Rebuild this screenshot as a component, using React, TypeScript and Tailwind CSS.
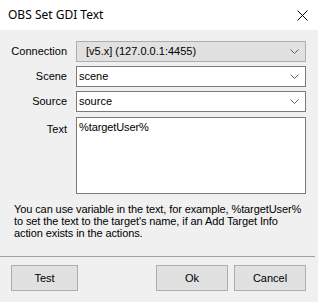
import React from 'react';

const ui = { fontFamily: '"Liberation Sans", Arial, sans-serif' };

function Chevron({ color = '#606060' }: { color?: string }) {
  return (
    <svg width="9" height="6" viewBox="0 0 9 6" className="shrink-0">
      <path d="M0.5 0.5 L4.5 4.5 L8.5 0.5" fill="none" stroke={color} strokeWidth="1" />
    </svg>
  );
}

function Row({ label, children, top }: { label: string; children: React.ReactNode; top?: boolean }) {
  return (
    <div className={`flex ${top ? 'items-start' : 'items-center'}`}>
      <div className={`w-[67px] shrink-0 text-right text-[11px] text-black ${top ? 'pt-[5px]' : ''}`}>
        {label}
      </div>
      <div className="ml-[9px] w-[230px]">{children}</div>
    </div>
  );
}

export default function App() {
  return (
    <div className="h-[302px] w-[318px] overflow-hidden bg-[#f0f0f0]" style={ui}>
      <div className="flex h-[30px] items-center justify-between bg-white pl-[8px] pr-[10px]">
        <span className="text-[12px] text-black" style={{ fontFamily: '"Noto Sans", sans-serif' }}>
          OBS Set GDI Text
        </span>
        <svg width="11" height="11" viewBox="0 0 11 11">
          <path d="M0.5 0.5 L10.5 10.5 M10.5 0.5 L0.5 10.5" stroke="#000" strokeWidth="1" />
        </svg>
      </div>

      <div className="flex flex-col gap-[4px] pt-[11px]">
        <Row label="Connection">
          <div className="flex h-[21px] items-center justify-between border border-[#adadad] bg-[#e1e1e1] pl-[9px] pr-[6px] text-[11px] text-black">
            <span>[v5.x] (127.0.0.1:4455)</span>
            <Chevron />
          </div>
        </Row>
        <Row label="Scene">
          <div className="flex h-[21px] items-center justify-between border border-[#7a7a7a] bg-white pl-[2px] pr-[6px] text-[11px] text-black">
            <span>scene</span>
            <Chevron />
          </div>
        </Row>
        <Row label="Source">
          <div className="flex h-[21px] items-center justify-between border border-[#7a7a7a] bg-white pl-[2px] pr-[6px] text-[11px] text-black">
            <span>source</span>
            <Chevron />
          </div>
        </Row>
        <Row label="Text" top>
          <div className="mt-[1px] h-[77px] border border-[#7a7a7a] bg-white pl-[2px] pt-[3px] text-[11px] leading-[13px] tracking-[-0.1px] text-black">
            %targetUser%
          </div>
        </Row>
      </div>

      <p className="mt-[9px] pl-[14px] pr-[10px] text-[11px] leading-[12px] tracking-[-0.1px] text-black">
        You can use variable in the text, for example, %targetUser%
        <br />
        to set the text to the target's name, if an Add Target Info
        <br />
        action exists in the actions.
      </p>

      <div className="mt-[17px] h-px w-[315px] bg-[#a0a0a0]" />

      <div className="mt-[8px] flex items-center pl-[11px] pr-[12px] text-[11px] text-black">
        <button className="h-[26px] w-[67px] border border-[#adadad] bg-[#e1e1e1]">Test</button>
        <div className="flex-1" />
        <button className="h-[26px] w-[72px] border border-[#adadad] bg-[#e1e1e1]">Ok</button>
        <button className="ml-[6px] h-[26px] w-[72px] border border-[#adadad] bg-[#e1e1e1]">Cancel</button>
      </div>
    </div>
  );
}
